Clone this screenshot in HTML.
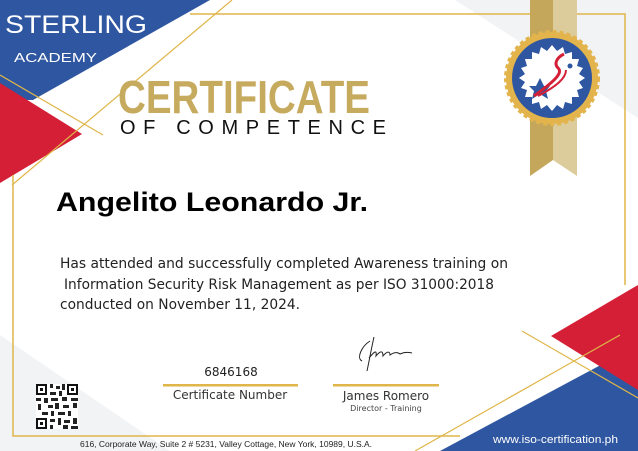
<!DOCTYPE html>
<html><head><meta charset="utf-8"><style>
html,body{margin:0;padding:0;background:#fff;}
svg{display:block;}
</style></head><body>
<svg width="638" height="451" viewBox="0 0 638 451" xmlns="http://www.w3.org/2000/svg">
<rect width="638" height="451" fill="#fff"/>
<polygon points="455,0 638,0 638,118" fill="#f2f3f5"/>
<polygon points="0,335 170,451 0,451" fill="#f2f3f5"/>
<polygon points="0,0 210,0 33,100 0,100" fill="#2f56a0"/>
<polygon points="0,83 82,134 0,183" fill="#d41f36"/>
<polygon points="440,451 638,345 638,451" fill="#2f56a0"/>
<polygon points="551,336 638,285 638,390" fill="#d41f36"/>
<polyline points="190,14 625,14 625,285" fill="none" stroke="#e0b64a" stroke-width="1.5"/>
<polyline points="13,175 13,436 460,436" fill="none" stroke="#e0b64a" stroke-width="1.5"/>
<line x1="0" y1="75" x2="103" y2="135" stroke="#e0b64a" stroke-width="1.2"/>
<line x1="232" y1="0" x2="12" y2="185" stroke="#e0b64a" stroke-width="1.2"/>
<line x1="522" y1="331" x2="638" y2="398" stroke="#e0b64a" stroke-width="1.2"/>
<line x1="415" y1="451" x2="620" y2="335" stroke="#e0b64a" stroke-width="1.2"/>
<polygon points="530,0 553,0 553,160 530,176" fill="#c5a75c"/>
<polygon points="553,0 577,0 577,176 553,160" fill="#dccb9b"/>
<g transform="translate(552,78)">
<circle r="46" fill="#e3b44c" stroke="#e3b44c" stroke-width="4" stroke-dasharray="4 3"/>
<circle r="40" fill="#2f56a0"/>
<polygon fill="#fff" points="0,-33 5,-27 11,-31 13,-24 20,-26 20,-19 27,-19 25,-12 31,-10 27,-4 33,0 27,4 31,10 25,12 27,19 20,19 20,26 13,24 11,31 5,27 0,33 -5,27 -11,31 -13,24 -20,26 -20,19 -27,19 -25,12 -31,10 -27,4 -33,0 -27,-4 -31,-10 -25,-12 -27,-19 -20,-19 -20,-26 -13,-24 -11,-31 -5,-27"/>
<polygon fill="#2f56a0" points="-12,0 -8,8 -2,8 -6,13 -4,21 -12,16 -20,21 -18,13 -23,8 -16,8"/>
<path d="M-18,18 C0,5 12,-5 6,-10 C2,-14 4,-20 12,-24" stroke="#d41f36" stroke-width="3" fill="none"/>
<path d="M-14,18 C5,8 14,0 14,-8" stroke="#d41f36" stroke-width="2" fill="none"/>
<circle cx="18" cy="-12" r="2.5" fill="#2f56a0"/>
</g>
<text x="5" y="33" fill="#fff" font-family="Liberation Sans,sans-serif" font-size="25" textLength="142" lengthAdjust="spacingAndGlyphs">STERLING</text>
<text x="14" y="62" fill="#fff" font-family="Liberation Sans,sans-serif" font-size="13" textLength="83" lengthAdjust="spacingAndGlyphs">ACADEMY</text>
<text x="118" y="113" fill="#c6aa5e" font-family="Liberation Sans,sans-serif" font-weight="bold" font-size="46" textLength="252" lengthAdjust="spacingAndGlyphs">CERTIFICATE</text>
<text x="120" y="134" fill="#111" font-family="Liberation Sans,sans-serif" font-size="20" textLength="266" lengthAdjust="spacing">OF COMPETENCE</text>
<text x="56" y="211" fill="#000" font-family="Liberation Sans,sans-serif" font-weight="bold" font-size="27" textLength="312" lengthAdjust="spacingAndGlyphs">Angelito Leonardo Jr.</text>
<g font-family="DejaVu Sans,sans-serif" font-size="14" fill="#222">
<text x="60" y="268" textLength="448" lengthAdjust="spacingAndGlyphs">Has attended and successfully completed Awareness training on</text>
<text x="64" y="289" textLength="430" lengthAdjust="spacingAndGlyphs">Information Security Risk Management as per ISO 31000:2018</text>
<text x="60" y="309" textLength="240" lengthAdjust="spacingAndGlyphs">conducted on November 11, 2024.</text>
</g>
<text x="231" y="376" text-anchor="middle" font-family="DejaVu Sans,sans-serif" font-size="12" fill="#222">6846168</text>
<rect x="163" y="384" width="135" height="2.5" fill="#e0b64a"/>
<text x="230" y="399" text-anchor="middle" font-family="DejaVu Sans,sans-serif" font-size="12" fill="#333">Certificate Number</text>
<rect x="333" y="384" width="106" height="2.5" fill="#e0b64a"/>
<text x="386" y="400" text-anchor="middle" font-family="DejaVu Sans,sans-serif" font-size="12" fill="#333">James Romero</text>
<text x="386" y="411" text-anchor="middle" font-family="DejaVu Sans,sans-serif" font-size="8" fill="#444">Director - Training</text>
<path d="M370,341 C362,346 356,358 362,361 M374,337 C371,350 369,362 367,371 M369,358 C374,352 377,349 376,356 C380,351 383,350 383,356 C387,351 390,351 390,355 C394,352 398,352 400,354 C404,352 408,352 412,353" stroke="#222" stroke-width="1" fill="none"/>
<g transform="translate(36,384)">
<rect width="42" height="45" fill="#fff"/>
<rect x="0" y="0" width="11" height="11" fill="#111"/><rect x="2" y="2" width="7" height="7" fill="#fff"/><rect x="4" y="4" width="3" height="3" fill="#111"/>
<rect x="31" y="0" width="11" height="11" fill="#111"/><rect x="33" y="2" width="7" height="7" fill="#fff"/><rect x="35" y="4" width="3" height="3" fill="#111"/>
<rect x="0" y="34" width="11" height="11" fill="#111"/><rect x="2" y="36" width="7" height="7" fill="#fff"/><rect x="4" y="38" width="3" height="3" fill="#111"/>
<g fill="#222">
<rect x="14" y="0" width="3" height="4"/><rect x="20" y="2" width="4" height="3"/><rect x="26" y="0" width="3" height="6"/>
<rect x="14" y="8" width="6" height="3"/><rect x="23" y="7" width="3" height="5"/>
<rect x="0" y="14" width="5" height="3"/><rect x="8" y="14" width="4" height="5"/><rect x="15" y="14" width="7" height="3"/><rect x="26" y="13" width="5" height="4"/><rect x="35" y="14" width="7" height="3"/>
<rect x="2" y="20" width="3" height="6"/><rect x="12" y="21" width="5" height="3"/><rect x="19" y="19" width="4" height="6"/><rect x="27" y="21" width="6" height="3"/><rect x="37" y="19" width="4" height="5"/>
<rect x="6" y="28" width="6" height="3"/><rect x="15" y="27" width="3" height="5"/><rect x="22" y="28" width="7" height="3"/><rect x="32" y="27" width="3" height="5"/>
<rect x="14" y="35" width="5" height="3"/><rect x="22" y="34" width="3" height="7"/><rect x="28" y="36" width="6" height="3"/><rect x="37" y="34" width="4" height="6"/>
<rect x="14" y="41" width="3" height="4"/><rect x="27" y="41" width="5" height="4"/><rect x="35" y="42" width="7" height="3"/>
</g>
</g>
<text x="80" y="447" font-family="Liberation Sans,sans-serif" font-size="8" fill="#222" textLength="292" lengthAdjust="spacingAndGlyphs">616, Corporate Way,  Suite 2 # 5231, Valley Cottage, New York, 10989, U.S.A.</text>
<text x="493" y="443" font-family="Liberation Sans,sans-serif" font-size="11" fill="#fff" textLength="125" lengthAdjust="spacingAndGlyphs">www.iso-certification.ph</text>
</svg>
</body></html>
